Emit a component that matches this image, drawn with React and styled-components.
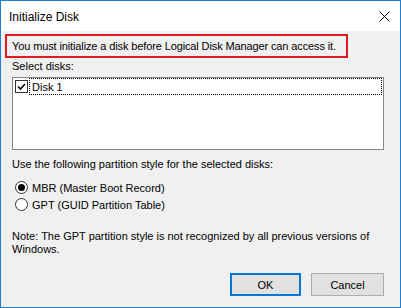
import React from "react";
import styled, { createGlobalStyle } from "styled-components";

const Global = createGlobalStyle`
  html, body { margin: 0; padding: 0; background: #f0f0f0; }
  * { box-sizing: border-box; }
`;

const Window = styled.div`
  width: 401px;
  height: 308px;
  border: 1px solid #1c7fd4;
  display: flex;
  flex-direction: column;
  font-family: "Liberation Sans", Arial, sans-serif;
  font-size: 11px;
  color: #000;
  background: #f0f0f0;
`;

const TitleBar = styled.div`
  height: 30px;
  background: #fff;
  display: flex;
  align-items: center;
  justify-content: space-between;
  padding-left: 8px;
`;

const Title = styled.span`
  font-size: 12px;
  padding-top: 1px;
`;

const CloseBtn = styled.div`
  width: 30px;
  height: 30px;
  display: flex;
  align-items: center;
  justify-content: center;
  padding-right: 2px;
`;

const Body = styled.div`
  flex: 1;
  display: flex;
  flex-direction: column;
  padding: 3px 16px 11px 4px;
`;

const Highlight = styled.div`
  width: 343px;
  height: 24px;
  border: 2px solid #e21b23;
  display: flex;
  align-items: center;
  padding-left: 5px;
  letter-spacing: -0.12px;
`;

const Label = styled.div`
  line-height: 15px;
  margin-left: 7px;
  margin-top: ${(p) => p.$mt || 0}px;
`;

const ListBox = styled.div`
  margin: 3px 0 0 7px;
  height: 73px;
  background: #fff;
  border: 1px solid #828790;
  padding: 0 1px;
`;

const ListItem = styled.div`
  display: flex;
  align-items: center;
  height: 17px;
`;

const CheckBox = styled.div`
  width: 13px;
  height: 13px;
  border: 1px solid #333;
  background: #fff;
  margin: 0 1px 0 1px;
  display: flex;
  align-items: center;
  justify-content: center;
`;

const ItemText = styled.div`
  flex: 1;
  height: 17px;
  border: 1px dotted #000;
  display: flex;
  align-items: center;
  padding-left: 2px;
`;

const RadioGroup = styled.div`
  display: flex;
  flex-direction: column;
  gap: 2px;
  margin: 8px 0 0 10px;
`;

const RadioRow = styled.div`
  display: flex;
  align-items: center;
  gap: 4px;
  height: 15px;
`;

const Radio = styled.div`
  width: 13px;
  height: 13px;
  border-radius: 50%;
  border: 1px solid #333;
  background: #fff;
  display: flex;
  align-items: center;
  justify-content: center;
  &::after {
    content: "";
    width: 7px;
    height: 7px;
    border-radius: 50%;
    background: ${(p) => (p.$checked ? "#000" : "transparent")};
  }
`;

const Note = styled.div`
  margin: 18px 0 0 7px;
  line-height: 13px;
  width: 370px;
`;

const Buttons = styled.div`
  margin-top: auto;
  display: flex;
  justify-content: flex-end;
  gap: 10px;
`;

const Button = styled.button`
  width: ${(p) => p.$w}px;
  height: 23px;
  font-family: inherit;
  font-size: 11px;
  color: #000;
  background: #e1e1e1;
  border: ${(p) => (p.$default ? "2px solid #0078d7" : "1px solid #adadad")};
  padding: 0;
`;

export default function App() {
  return (
    <>
      <Global />
      <Window>
        <TitleBar>
          <Title>Initialize Disk</Title>
          <CloseBtn>
            <svg width="11" height="11" viewBox="0 0 11 11">
              <path d="M0.5 0.5 L10.5 10.5 M10.5 0.5 L0.5 10.5" stroke="#000" strokeWidth="1" />
            </svg>
          </CloseBtn>
        </TitleBar>
        <Body>
          <Highlight>You must initialize a disk before Logical Disk Manager can access it.</Highlight>
          <Label $mt={1}>Select disks:</Label>
          <ListBox>
            <ListItem>
              <CheckBox>
                <svg width="9" height="8" viewBox="0 0 9 8">
                  <path d="M1 3.5 L3.5 6 L8 1" stroke="#000" strokeWidth="1.6" fill="none" />
                </svg>
              </CheckBox>
              <ItemText>Disk 1</ItemText>
            </ListItem>
          </ListBox>
          <Label $mt={7}>Use the following partition style for the selected disks:</Label>
          <RadioGroup>
            <RadioRow>
              <Radio $checked />
              <span>MBR (Master Boot Record)</span>
            </RadioRow>
            <RadioRow>
              <Radio />
              <span>GPT (GUID Partition Table)</span>
            </RadioRow>
          </RadioGroup>
          <Note>Note: The GPT partition style is not recognized by all previous versions of Windows.</Note>
          <Buttons>
            <Button $default $w={71}>OK</Button>
            <Button $w={73}>Cancel</Button>
          </Buttons>
        </Body>
      </Window>
    </>
  );
}
